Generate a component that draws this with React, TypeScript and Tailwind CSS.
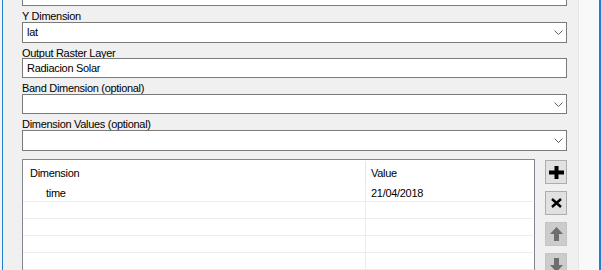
import { ReactNode } from "react";

const font = { fontFamily: '"Liberation Sans", Arial, sans-serif' };

function Label({ children, h }: { children: ReactNode; h: string }) {
  return (
    <div className={`${h} shrink-0 overflow-visible pt-[2px] text-[11px] leading-[16px] tracking-[-0.3px] text-black`}>
      {children}
    </div>
  );
}

function Chevron() {
  return (
    <svg width="9" height="5" viewBox="0 0 9 5" className="shrink-0">
      <path d="M0.5 0.5 L4.5 4.5 L8.5 0.5" fill="none" stroke="#606060" strokeWidth="1" />
    </svg>
  );
}

function Combo({ value, h }: { value?: string; h: string }) {
  return (
    <div
      className={`${h} flex shrink-0 items-center justify-between border border-[#7a7a7a] bg-white pl-[4px] pr-[3px] text-[11px] tracking-[-0.3px] text-black`}
    >
      <span>{value}</span>
      <Chevron />
    </div>
  );
}

function ToolButton({ children, disabled }: { children: ReactNode; disabled?: boolean }) {
  return (
    <div
      className={
        disabled
          ? "flex h-[24px] w-[22px] items-center justify-center border border-[#c4c4c4] bg-[#cccccc]"
          : "flex h-[24px] w-[22px] items-center justify-center border border-[#adadad] bg-[#e1e1e1]"
      }
    >
      {children}
    </div>
  );
}

const rows = [
  { dim: "time", value: "21/04/2018" },
  { dim: "", value: "" },
  { dim: "", value: "" },
  { dim: "", value: "" },
  { dim: "", value: "" },
];

export default function App() {
  return (
    <div className="flex h-[270px] w-[601px] overflow-hidden bg-[#f0f0f0]" style={font}>
      <div className="w-[2px] shrink-0 bg-[#f4f4f4]" />
      <div className="w-[1px] shrink-0 bg-[#1f7fd0]" />

      <div className="flex w-[575px] shrink-0 flex-col pl-[19px] pr-[11px]">
        <div className="h-[6px] shrink-0 border-x border-b border-[#7a7a7a] bg-white" />
        <Label h="h-[16px]">Y Dimension</Label>
        <Combo h="h-[21px]" value="lat" />
        <Label h="h-[15px]">Output Raster Layer</Label>
        <div className="flex h-[20px] shrink-0 items-center border border-[#7a7a7a] bg-white pl-[4px] text-[11px] tracking-[-0.3px] text-black">
          Radiacion Solar
        </div>
        <Label h="h-[16px]">Band Dimension (optional)</Label>
        <Combo h="h-[20px]" />
        <Label h="h-[16px]">Dimension Values (optional)</Label>
        <Combo h="h-[21px]" />

        <div className="mt-[8px] flex shrink-0 items-start gap-[10px]">
          <div className="h-[130px] w-[513px] shrink-0 border border-[#828790] bg-white text-[11px] tracking-[-0.3px] text-black">
            <div className="flex h-[25px] pt-[1px] leading-[24px]">
              <div className="w-[343px] border-r border-[#e5e5e5] pl-[7px]">Dimension</div>
              <div className="flex-1 pl-[5px]">Value</div>
            </div>
            {rows.map((r, i) => (
              <div key={i} className="mr-[1px] flex h-[17px] border-b border-[#ececec] leading-[17px]">
                <div className="w-[343px] border-r border-[#ececec] pl-[23px]">{r.dim}</div>
                <div className="flex-1 pl-[5px]">{r.value}</div>
              </div>
            ))}
          </div>

          <div className="mt-[1px] flex flex-col gap-[7px]">
            <ToolButton>
              <svg width="15" height="13" viewBox="0 0 15 13">
                <rect x="5.5" y="0" width="4" height="13" fill="#000" />
                <rect x="0" y="4.5" width="15" height="4" fill="#000" />
              </svg>
            </ToolButton>
            <ToolButton>
              <svg width="11" height="10" viewBox="0 0 11 10">
                <path d="M1 1 L10 9 M10 1 L1 9" stroke="#000" strokeWidth="2.4" />
              </svg>
            </ToolButton>
            <ToolButton disabled>
              <svg width="13" height="14" viewBox="0 0 13 14">
                <path d="M6.5 0 L13 7 L9 7 L9 14 L4 14 L4 7 L0 7 Z" fill="#6e6e6e" />
              </svg>
            </ToolButton>
            <ToolButton disabled>
              <svg width="13" height="14" viewBox="0 0 13 14">
                <path d="M6.5 14 L13 7 L9 7 L9 0 L4 0 L4 7 L0 7 Z" fill="#6e6e6e" />
              </svg>
            </ToolButton>
          </div>
        </div>
      </div>

      <div className="w-[21px] shrink-0 border-l border-[#e6e6e6] bg-[#f9f9f9]" />
      <div className="w-[2px] shrink-0 bg-[#1f7fd0]" />
    </div>
  );
}
